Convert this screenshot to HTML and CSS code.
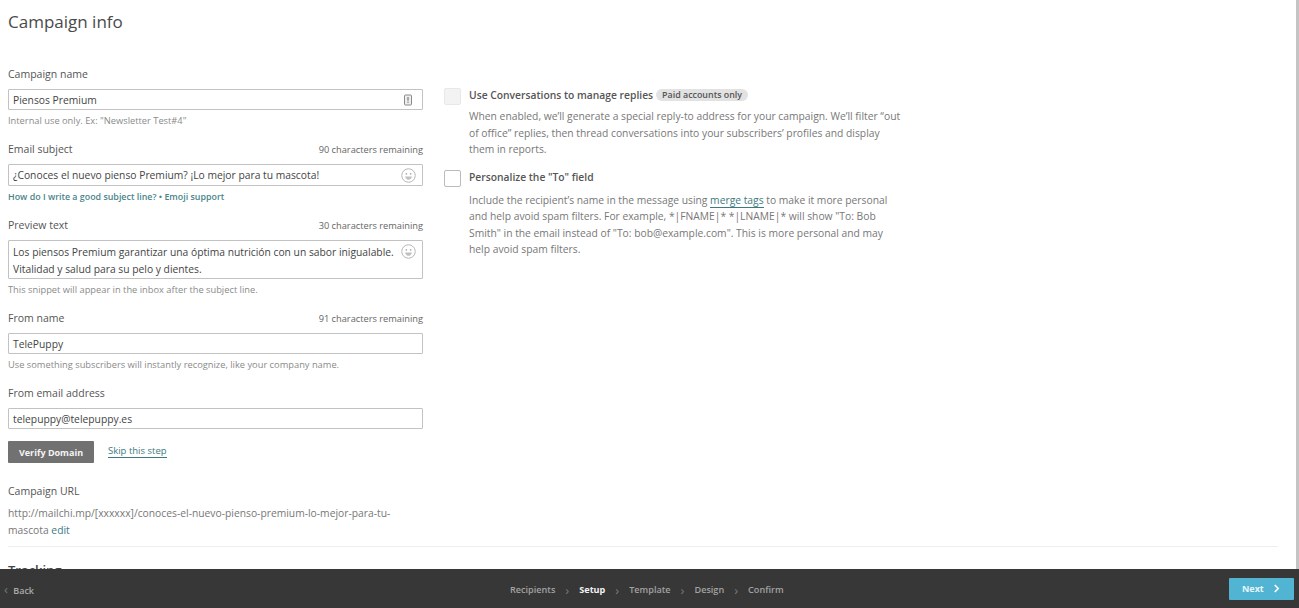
FILE: index.html
```html
<!DOCTYPE html>
<html lang="en">
<head>
  <meta charset="UTF-8" />
  <title>Campaign info</title>
  <link rel="stylesheet" href="styles.css">
</head>
<body>
  <div class="page">
    <main class="content">
      <h1 class="page-title">Campaign info</h1>
      <div class="columns">
        <div class="col-left">
          <div class="field field-first">
            <div class="label-row"><label class="label">Campaign name</label></div>
            <div class="input">
              <span class="input-text">Piensos Premium</span>
              <svg class="icon-tag" viewBox="0 0 10 12" width="10" height="12"><rect x="1.5" y="1" width="7" height="10" rx="1" fill="#eee" stroke="#8a8a8a" stroke-width="1"/><rect x="4.4" y="3" width="1.2" height="3.6" fill="#777"/><rect x="4.4" y="7.6" width="1.2" height="1.2" fill="#777"/></svg>
            </div>
            <p class="help">Internal use only. Ex: "Newsletter Test#4"</p>
          </div>
          <div class="field">
            <div class="label-row"><label class="label">Email subject</label><span class="count">90 characters remaining</span></div>
            <div class="input input-subject">
              <span class="input-text">¿Conoces el nuevo pienso Premium? ¡Lo mejor para tu mascota!</span>
              <svg class="icon-smile" viewBox="0 0 14 14" width="15" height="15"><circle cx="7" cy="7" r="6.3" fill="none" stroke="#b5b5b5" stroke-width=".9"/><circle cx="5" cy="5.4" r=".8" fill="#aaa"/><circle cx="9" cy="5.4" r=".8" fill="#aaa"/><path d="M3.8 8h6.4c-.3 1.9-1.5 3-3.2 3s-2.9-1.1-3.2-3z" fill="#c0c0c0"/></svg>
            </div>
            <p class="help help-links"><a href="#">How do I write a good subject line?</a> • <a href="#">Emoji support</a></p>
          </div>
          <div class="field">
            <div class="label-row"><label class="label">Preview text</label><span class="count">30 characters remaining</span></div>
            <div class="input input-area">
              <span class="input-text">Los piensos Premium garantizar una óptima nutrición con un sabor inigualable. Vitalidad y salud para su pelo y dientes.</span>
              <svg class="icon-smile" viewBox="0 0 14 14" width="15" height="15"><circle cx="7" cy="7" r="6.3" fill="none" stroke="#b5b5b5" stroke-width=".9"/><circle cx="5" cy="5.4" r=".8" fill="#aaa"/><circle cx="9" cy="5.4" r=".8" fill="#aaa"/><path d="M3.8 8h6.4c-.3 1.9-1.5 3-3.2 3s-2.9-1.1-3.2-3z" fill="#c0c0c0"/></svg>
            </div>
            <p class="help">This snippet will appear in the inbox after the subject line.</p>
          </div>
          <div class="field">
            <div class="label-row"><label class="label">From name</label><span class="count">91 characters remaining</span></div>
            <div class="input"><span class="input-text">TelePuppy</span></div>
            <p class="help">Use something subscribers will instantly recognize, like your company name.</p>
          </div>
          <div class="field">
            <div class="label-row"><label class="label">From email address</label></div>
            <div class="input"><span class="input-text">telepuppy@telepuppy.es</span></div>
          </div>
          <div class="verify-row">
            <button class="btn-verify">Verify Domain</button>
            <a class="skip-link" href="#">Skip this step</a>
          </div>
          <div class="url-block">
            <div class="label">Campaign URL</div>
            <p class="url-text">http://mailchi.mp/[xxxxxx]/conoces-el-nuevo-pienso-premium-lo-mejor-para-tu-mascota <a href="#">edit</a></p>
          </div>
        </div>
        <div class="col-right">
          <div class="option">
            <span class="checkbox checkbox-disabled"></span>
            <div class="option-body">
              <div class="option-title">Use Conversations to manage replies <span class="pill">Paid accounts only</span></div>
              <p class="option-text">When enabled, we’ll generate a special reply-to address for your campaign. We’ll filter “out of office” replies, then thread conversations into your subscribers’ profiles and display them in reports.</p>
            </div>
          </div>
          <div class="option">
            <span class="checkbox"></span>
            <div class="option-body">
              <div class="option-title">Personalize the "To" field</div>
              <p class="option-text">Include the recipient’s name in the message using <a href="#">merge tags</a> to make it more personal and help avoid spam filters. For example, *|FNAME|* *|LNAME|* will show "To: Bob Smith" in the email instead of "To: bob@example.com". This is more personal and may help avoid spam filters.</p>
            </div>
          </div>
        </div>
      </div>
      <hr class="divider" />
      <h2 class="section-title">Tracking</h2>
    </main>
    <div class="scrollbar"></div>
  </div>
  <footer class="footer">
    <a class="back" href="#"><span class="back-arrow">‹</span> Back</a>
    <ol class="steps">
      <li>Recipients</li>
      <li class="sep">›</li>
      <li class="step-on">Setup</li>
      <li class="sep">›</li>
      <li>Template</li>
      <li class="sep">›</li>
      <li>Design</li>
      <li class="sep">›</li>
      <li>Confirm</li>
    </ol>
    <button class="btn-next">Next <svg viewBox="0 0 8 10" width="7" height="9"><path d="M2 1l4 4-4 4" fill="none" stroke="#fff" stroke-width="1.8"/></svg></button>
  </footer>
</body>
</html>
```

FILE: styles.css
```css
* { box-sizing: border-box; margin: 0; padding: 0; }
html, body { height: 100%; }
body {
  display: flex;
  flex-direction: column;
  height: 100vh;
  overflow: hidden;
  background: #fff;
  color: #555;
  font-family: "Open Sans", sans-serif;
  font-size: 11px;
}
a { color: #3d7a80; text-decoration: none; }

.page {
  flex: 1;
  display: flex;
  min-height: 0;
  overflow: hidden;
}
.content {
  flex: 1;
  padding: 9px 18px 0 8px;
  overflow: hidden;
}
.scrollbar {
  width: 3px;
  background: #c4c4c4;
}
.page-title {
  font-size: 17px;
  font-weight: 400;
  line-height: 26px;
  color: #4a4a4a;
}

.columns { display: flex; margin-top: 31px; }
.col-left { width: 415px; }
.col-right { width: 460px; margin-left: 21px; padding-top: 22px; }

.field { margin-top: 14px; }
.field-first { margin-top: 0; }
.label-row {
  display: flex;
  justify-content: space-between;
  align-items: center;
  height: 16px;
}
.label { font-size: 10.5px; color: #555; }
.count { font-size: 9.25px; color: #666; }

.input {
  display: flex;
  justify-content: space-between;
  align-items: center;
  height: 21px;
  margin-top: 7px;
  padding: 0 9px 0 4px;
  border: 1px solid #c2c2c2;
  border-radius: 1px;
  background: #fff;
  font-size: 10.3px;
  color: #444;
}
.input-subject { height: 22px; padding-right: 6px; }
.input-area {
  height: 39px;
  align-items: flex-start;
  padding: 3px 6px 0 4px;
  line-height: 16.5px;
}
.input-area .input-text { flex: none; width: 388px; }
.icon-smile { flex: none; }

.help {
  margin-top: 5px;
  font-size: 9.3px;
  line-height: 12px;
  color: #8a8a8a;
}
.help-links { font-size: 8.9px; font-weight: 600; }
.help-links, .help-links a { color: #4a858a; }

.verify-row {
  display: flex;
  align-items: center;
  gap: 14px;
  margin-top: 12px;
}
.btn-verify {
  width: 86px;
  height: 22px;
  border: 0;
  border-radius: 1px;
  background: #717171;
  color: #f4f4f4;
  font-family: inherit;
  font-size: 9px;
  font-weight: 700;
}
.skip-link {
  font-size: 9.5px;
  border-bottom: 1px solid #3d7a80;
  margin-top: -2px;
}

.url-block { margin-top: 21px; }
.url-text {
  margin-top: 7px;
  width: 390px;
  font-size: 10.3px;
  line-height: 16.5px;
  color: #777;
}

.option { display: flex; gap: 8px; margin-bottom: 12px; }
.checkbox {
  flex: none;
  width: 17px;
  height: 17px;
  border: 1px solid #bbb;
  border-radius: 2px;
  background: #fff;
}
.checkbox-disabled { border-color: #e8e8e8; background: #f3f3f3; }
.option-body { flex: 1; }
.option-title {
  display: flex;
  align-items: center;
  gap: 3px;
  height: 16px;
  margin-top: -1px;
  font-size: 10.3px;
  font-weight: 600;
  color: #555;
}
.pill {
  padding: 0 6px;
  border-radius: 8px;
  background: #e2e2e2;
  font-size: 8.9px;
  line-height: 12px;
  color: #555;
}
.option-text {
  margin-top: 5px;
  font-size: 10.3px;
  line-height: 16.5px;
  color: #777;
}
.option + .option .option-text { margin-top: 7px; }
.option-text a { color: #3d7a80; border-bottom: 1px solid #3d7a80; }

.divider {
  margin-top: 8px;
  border: 0;
  border-top: 1px solid #eee;
}
.section-title {
  margin-top: 14px;
  font-size: 13px;
  font-weight: 600;
  color: #444;
}

.footer {
  flex: none;
  display: flex;
  align-items: center;
  justify-content: space-between;
  position: relative;
  height: 39px;
  padding: 0 5px 0 4px;
  background: #373737;
}
.back { font-size: 9px; font-weight: 600; color: #aaa; }
.back-arrow { font-size: 13px; font-weight: 400; color: #777; margin-right: 3px; }
.steps {
  position: absolute;
  left: 510px;
  top: 1px;
  height: 39px;
  display: flex;
  align-items: center;
  gap: 10px;
  list-style: none;
  font-size: 9.1px;
  font-weight: 600;
  color: #a2a2a2;
}
.steps .sep { font-size: 13px; font-weight: 400; color: #777; }
.steps .step-on { color: #f2f2f2; font-weight: 700; }
.btn-next {
  display: flex;
  align-items: center;
  gap: 9px;
  width: 65px;
  height: 22px;
  padding-left: 13px;
  border: 0;
  border-radius: 1px;
  background: #52b4d3;
  color: #e8f6fa;
  font-family: inherit;
  font-size: 9px;
  font-weight: 700;
}
```
